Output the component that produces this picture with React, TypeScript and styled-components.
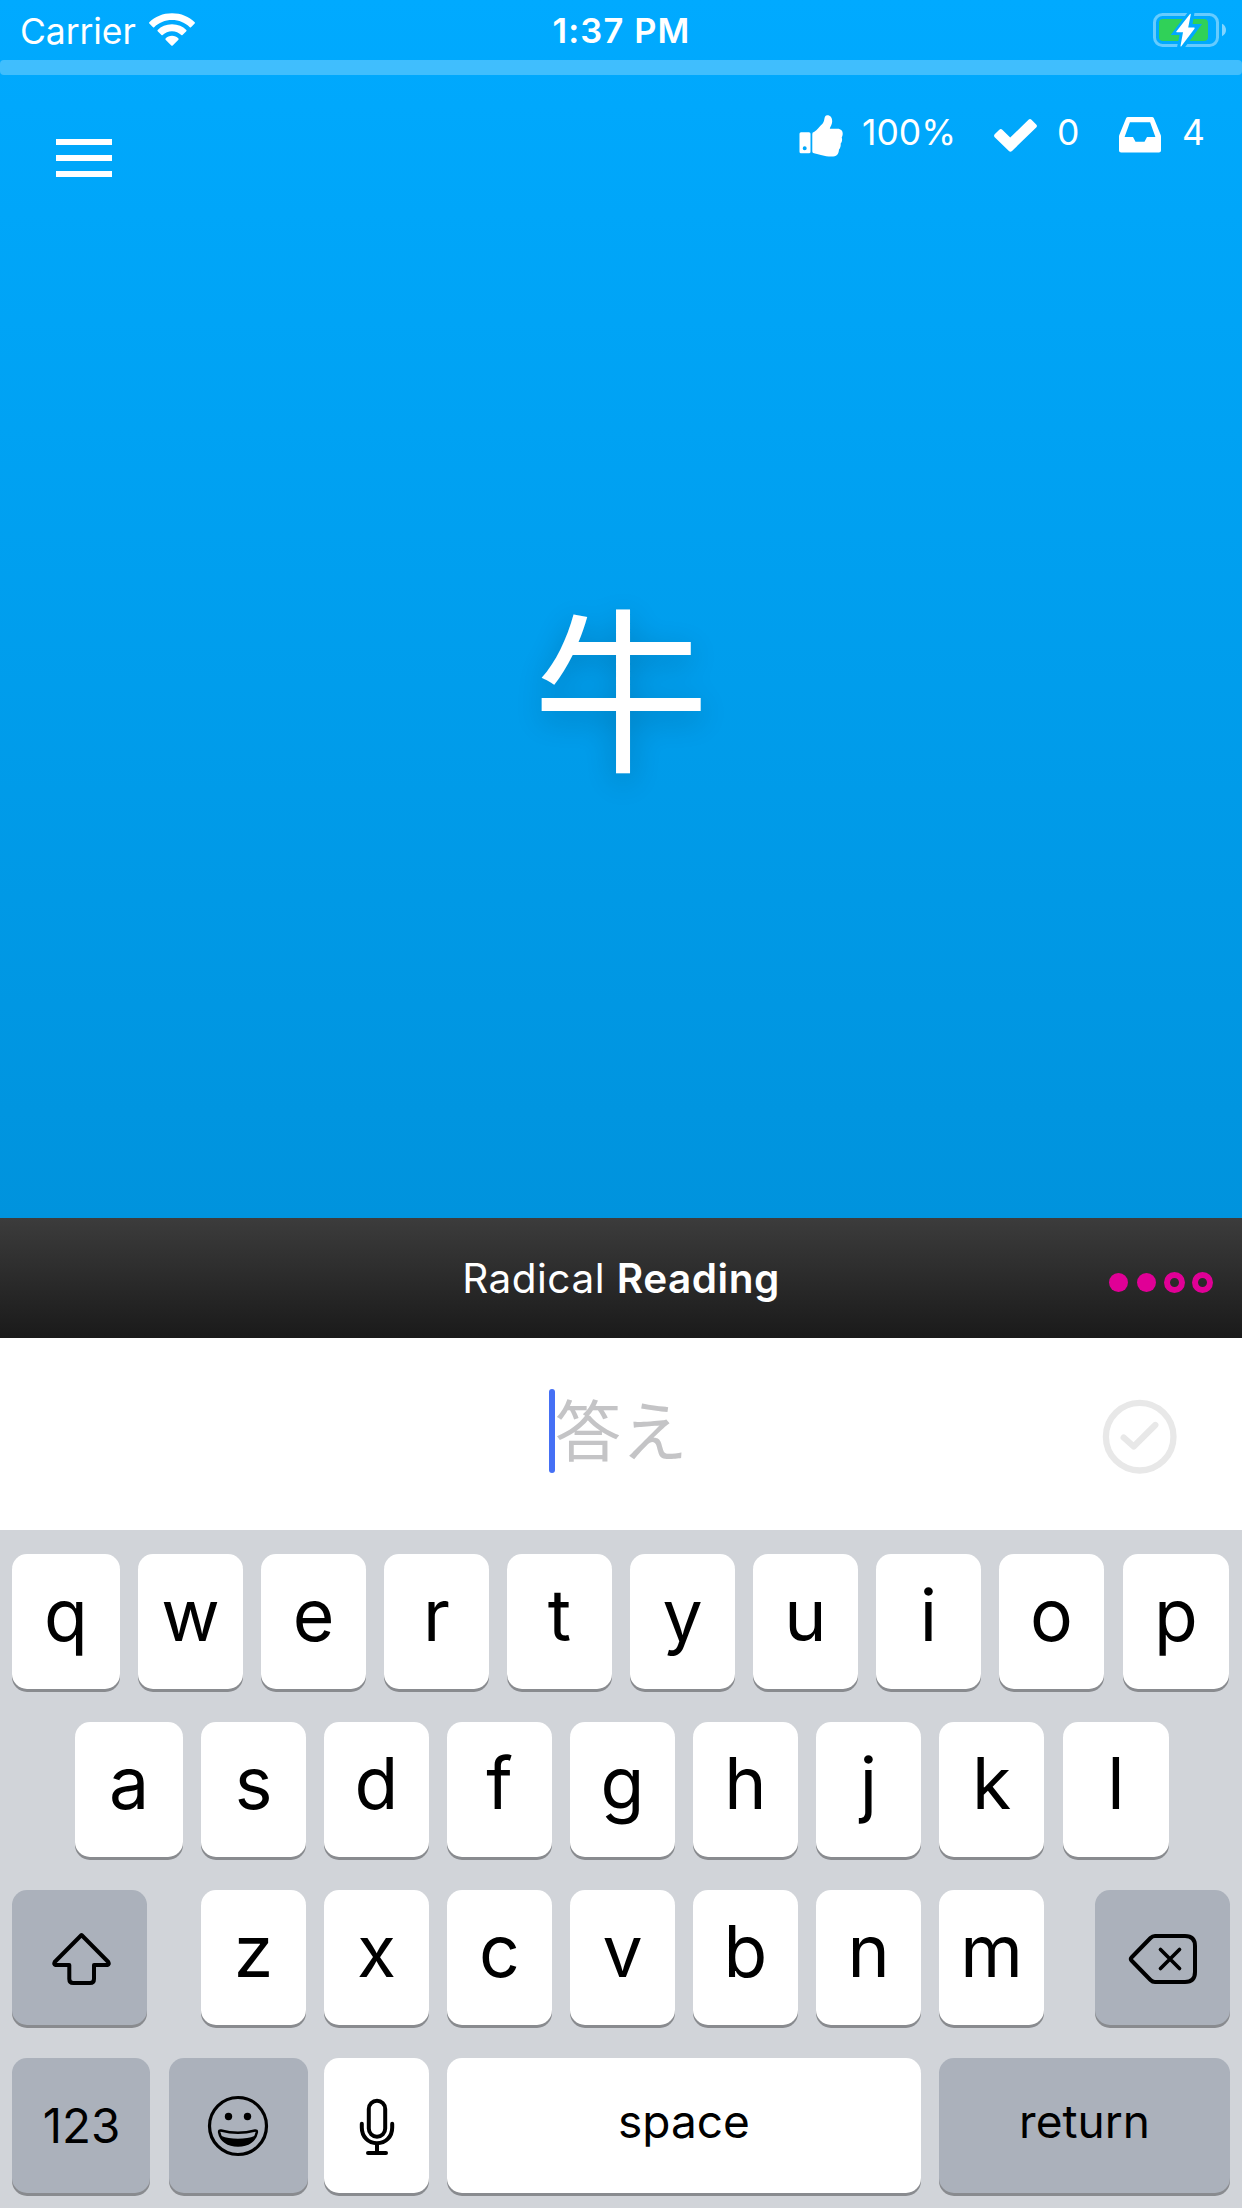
import React from 'react';
import styled, { createGlobalStyle } from 'styled-components';

const Global = createGlobalStyle`
  * { box-sizing: border-box; }
  body { margin: 0; background: #d1d4d9; font-family: Inter, "Noto Sans CJK JP", sans-serif; }
  svg { display: block; }
`;

const Screen = styled.div`
  width: 1242px;
  height: 2208px;
  display: flex;
  flex-direction: column;
  overflow: hidden;
`;

const Hero = styled.section`
  height: 1218px;
  display: flex;
  flex-direction: column;
  color: #fff;
  background: linear-gradient(#00aaff, #0093dd);
`;

const StatusBar = styled.header`
  height: 60px;
  padding: 0 16px 0 20px;
  display: grid;
  grid-template-columns: 1fr auto 1fr;
  align-items: center;
`;

const Label = styled.span<{ $size: number; $weight?: number; $spacing?: number }>`
  font-size: ${p => p.$size}px;
  font-weight: ${p => p.$weight ?? 400};
  letter-spacing: ${p => p.$spacing ?? 0}px;
  line-height: 1.2;
  white-space: pre;
`;

const Carrier = styled.div`
  display: flex;
  align-items: center;
  gap: 13px;
  padding-top: 4px;
`;

const WifiSlot = styled.div`
  padding-bottom: 5px;
`;

const Clock = styled.div`
  padding: 2px 3px 0 0;
`;

const Power = styled.div`
  display: flex;
  justify-content: flex-end;
`;

const Progress = styled.div`
  height: 15px;
  border-radius: 4px;
  background: rgba(255, 255, 255, 0.25);
`;

const Toolbar = styled.nav`
  display: flex;
  justify-content: space-between;
  align-items: flex-start;
  padding: 36px 37px 0 56px;
`;

const MenuButton = styled.button`
  width: 56px;
  height: 38px;
  margin-top: 28px;
  padding: 0;
  border: 0;
  background: none;
  display: flex;
  flex-direction: column;
  justify-content: space-between;
`;

const MenuBar = styled.span`
  height: 6px;
  width: 100%;
  background: #fff;
`;

const Stats = styled.div`
  display: grid;
  grid-template-columns: 195px 125px 86px;
`;

const Stat = styled.div`
  display: grid;
  grid-template-columns: 63px auto;
  justify-content: start;
  align-items: start;
`;

const StatIcon = styled.div<{ $drop: number }>`
  padding-top: ${p => p.$drop}px;
`;

const StatValue = styled.div`
  padding-top: 1px;
`;

const Prompt = styled.div`
  flex: 1;
  display: flex;
  justify-content: center;
  padding-top: 417px;
  font: 400 177px/177px "Noto Sans CJK JP", sans-serif;
  text-shadow: 0 8px 30px rgba(0, 0, 0, 0.2);
`;

const Question = styled.section`
  height: 120px;
  display: grid;
  grid-template-columns: 1fr auto 1fr;
  align-items: center;
  color: #fff;
  background: linear-gradient(#3c3c3c, #1a1a1a);
`;

const Title = styled.h1`
  margin: 0;
  grid-column: 2;
  display: flex;
  font-weight: 400;
  padding-top: 3px;
`;

const Level = styled.div`
  display: flex;
  justify-content: flex-end;
  align-items: center;
  gap: 7px;
  padding: 8px 29px 0 0;
`;

const Dot = styled.span<{ $hollow?: boolean }>`
  width: 21px;
  height: 21px;
  border-radius: 50%;
  border: ${p => (p.$hollow ? '6px solid #e00096' : '1px solid transparent')};
  background: ${p => (p.$hollow ? 'none' : '#e00096')};
  background-clip: padding-box;
`;

const Answer = styled.section`
  height: 192px;
  display: grid;
  grid-template-columns: 1fr auto 1fr;
  background: #fff;
`;

const Field = styled.div`
  grid-column: 2;
  display: flex;
  align-items: flex-start;
  padding: 51px 5px 0 0;
`;

const Caret = styled.span`
  width: 6px;
  height: 84px;
  border-radius: 3px;
  background: #4570f5;
`;

const Placeholder = styled.span`
  font: 400 66px/77px "Noto Sans CJK JP", sans-serif;
  letter-spacing: 0.5px;
  color: #c4c4c6;
`;

const Submit = styled.button`
  justify-self: end;
  width: 76px;
  height: 76px;
  margin: 61px 65px 0 0;
  padding: 0;
  border: 0;
  background: none;
`;

const Keyboard = styled.section`
  flex: 1;
  padding: 24px 12px 0;
  display: flex;
  flex-direction: column;
  gap: 33px;
  background: #d1d4d9;
`;

const KeyRow = styled.div<{ $inset?: number }>`
  display: flex;
  height: 135px;
  padding-left: ${p => p.$inset ?? 0}px;
`;

const Key = styled.button<{ $w?: number; $before?: number; $gap?: number; $dark?: boolean; $pad?: string }>`
  flex: none;
  width: ${p => p.$w ?? 105}px;
  height: 135px;
  margin: 0 ${p => p.$gap ?? 18}px 0 ${p => p.$before ?? 0}px;
  padding: ${p => p.$pad ?? '0'};
  border: 0;
  border-radius: 15px;
  display: flex;
  align-items: center;
  justify-content: center;
  color: #000;
  font-family: inherit;
  background: ${p => (p.$dark ? '#abb1bb' : '#fff')};
  box-shadow: 0 3px 0 #898b8f;
`;

const Wifi = () => (
  <svg width="46" height="34" viewBox="0 0 46 34" fill="#fff">
    <path d="M23 0.3C32 .3 40.200 3.700 45.700 9.200Q46.200 9.800 45.700 10.400L42 14.200Q41.400 14.800 40.800 14.200C36.200 9.700 30 7 23 7S9.800 9.700 5.200 14.200Q4.600 14.800 4 14.200L.3 10.400Q-.2 9.800.3 9.200C5.800 3.700 14 .3 23 .3Z" />
    <path d="M23 11.300C29 11.300 33.800 13.500 37.300 17Q37.900 17.600 37.300 18.200L33.500 22Q32.900 22.600 32.300 22C29.800 19.600 26.700 18.200 23 18.200S16.200 19.600 13.700 22Q13.100 22.600 12.500 22L8.700 18.200Q8.100 17.600 8.700 17C12.200 13.500 17 11.300 23 11.300Z" />
    <path d="M23 22.800C25.600 22.800 27.800 23.900 29.400 25.500Q30 26.100 29.400 26.700L23.700 32.500Q23 33.200 22.300 32.500L16.600 26.700Q16 26.100 16.600 25.500C18.200 23.900 20.400 22.800 23 22.800Z" />
  </svg>
);

const Battery = () => (
  <svg width="73" height="34" viewBox="0 0 73 34">
    <mask id="bolt-gap">
      <rect width="73" height="34" fill="#fff" />
      <path d="M36.500 -3 17.700 22H26.500L23.500 37L30 37 49 10.900H39.500L42 -3Z" fill="#000" />
    </mask>
    <g mask="url(#bolt-gap)">
      <rect x="1.500" y="1.500" width="63" height="31" rx="8" fill="none" stroke="#fff" strokeOpacity=".4" strokeWidth="3" />
      <rect x="6" y="6" width="49" height="22" rx="4" fill="#30d158" />
    </g>
    <path d="M69 10.800C71.500 12 73 14.300 73 17S71.500 22 69 23.200Z" fill="#fff" fillOpacity=".5" />
    <path d="M37 1 23.300 18.500Q23 19.200 23.800 19.200H30L27.500 33Q27.800 34 28.500 33L41.500 15.800Q42 14.500 41 14.500H35.200L37.800 1.500Q37.500.5 37 1Z" fill="#fff" />
  </svg>
);

const Thumb = () => (
  <svg width="44" height="42" viewBox="0 0 44 42" fill="#fff">
    <path fillRule="evenodd" d="M2 17.300H10Q11.500 17.300 11.500 18.800V36.700Q11.500 38.200 10 38.200H2Q.5 38.200.5 36.700V18.800Q.5 17.300 2 17.300ZM5.700 31.300A2 2 0 1 0 5.700 35.300A2 2 0 1 0 5.700 31.300Z" />
    <path d="M13.300 19Q13.300 17.300 15 17.100C18.500 14.800 20 11.700 23.500 8.700C26.200 6.200 24.500.3 28.200.3C31.600.3 33.300 3 33.200 6.500C33.100 10 31 11.700 30.800 13.800H38.500C42 13.800 44 16.300 43.700 19C43.600 21 42.900 21.700 42.700 22.500C43.500 24.500 43.100 27 41.700 28.500C42 31 41.200 33.300 40 34.500C39.700 39.500 37.500 41.600 32.500 41.600C25 41.600 20.500 39.500 15 38.300Q13.300 38 13.300 36.500Z" />
  </svg>
);

const Check = () => (
  <svg width="43" height="33" viewBox="0 0 43 33" fill="#fff">
    <path d="M.7 15.300 5.300 10.700Q6.800 9.300 8.300 10.700L16.200 18.500 34.500.8Q36 -.6 37.500.8L42.200 5.400Q43.700 6.900 42.200 8.400L18 32Q16.400 33.300 14.900 32L.7 18.200Q-.6 16.800.7 15.300Z" />
  </svg>
);

const Inbox = () => (
  <svg width="42" height="36" viewBox="0 0 42 36" fill="#fff">
    <path fillRule="evenodd" d="M9 0H33Q34.300 0 34.900 1.300L41.500 17.500Q42 18.500 42 19.700V33.500Q42 35.600 39.900 35.600H2.100Q0 35.600 0 33.500V19.700Q0 18.500.5 17.500L7.100 1.300Q7.700 0 9 0ZM10.900 5.200 5.600 20H14L16.500 24.800H25.500L28 20H36.400L31.100 5.200Z" />
  </svg>
);

const SubmitIcon = () => (
  <svg width="76" height="76" viewBox="0 0 76 76" fill="none" stroke="#e8e8e8" strokeWidth="6.300" strokeLinecap="round" strokeLinejoin="round">
    <circle cx="38.700" cy="37.700" r="33.800" />
    <path d="M22.700 38.500 32.700 47.500 54.300 26" />
  </svg>
);

const Shift = () => (
  <svg width="60" height="54" viewBox="0 0 60 54" fill="none" stroke="#000" strokeWidth="4" strokeLinejoin="round">
    <path d="M30.500 3 3.700 30Q2.500 32.500 4.500 33H18.300V47Q18.300 51 22.300 51H39Q43 51 43 47V33H56.500Q58.500 32.500 57.300 30Z" />
  </svg>
);

const Backspace = () => (
  <svg width="70" height="52" viewBox="0 0 70 52" fill="none" stroke="#000" strokeWidth="4" strokeLinejoin="round" strokeLinecap="round">
    <path d="M27 3H57Q67 3 67 13V39Q67 49 57 49H27Q24.500 49 22.500 47L3.500 27.500Q2 26 3.500 24.500L22.500 5Q24.500 3 27 3Z" />
    <path d="M32.500 16.500 51.500 35.500M51.500 16.500 32.500 35.500" strokeWidth="3.700" />
  </svg>
);

const Smiley = () => (
  <svg width="62" height="62" viewBox="0 0 62 62" fill="none" stroke="#000" strokeWidth="3">
    <circle cx="31" cy="31" r="28.500" strokeWidth="3.200" />
    <circle cx="21.500" cy="21.500" r="3.700" fill="#000" stroke="none" />
    <circle cx="40.500" cy="21.500" r="3.700" fill="#000" stroke="none" />
    <path d="M14 35.500Q31 40 48 35.500Q50 35.200 49.800 37.200C48.300 45.500 41 50.500 31 50.500S13.700 45.500 12.200 37.200Q12 35.200 14 35.500Z" strokeWidth="2.600" />
    <path d="M14.500 41Q21 43.700 31 43.700T47.500 41C45 47.500 39.500 51 31 51S17 47.500 14.500 41Z" fill="#000" stroke="none" />
  </svg>
);

const Mic = () => (
  <svg width="36" height="58" viewBox="0 0 36 58" fill="none" stroke="#000" strokeWidth="4" strokeLinecap="round">
    <rect x="9.800" y="2.800" width="16.400" height="36" rx="8.200" />
    <path d="M2.800 25.800V29.500C2.800 39 9.500 45.300 18 45.300S33.200 39 33.200 29.500V25.800M18 45.300V55M9 55H27" />
  </svg>
);

const LetterKeys = ({ letters, first, last, lastGap = 19 }: { letters: string; first?: number; last?: number; lastGap?: number }) => (
  <>
    {letters.split('').map((letter, i) => (
      <Key
        key={letter}
        $pad="0 0 11px"
        $w={i === 0 ? first : i === letters.length - 1 ? last : undefined}
        $gap={i === letters.length - 2 ? lastGap : undefined}
      >
        <Label $size={71.500} $weight={380}>{letter}</Label>
      </Key>
    ))}
  </>
);

export default function App() {
  return (
    <>
      <Global />
      <Screen>
        <Hero>
          <StatusBar>
            <Carrier>
              <Label $size={35.500} $spacing={-0.100}>Carrier</Label>
              <WifiSlot><Wifi /></WifiSlot>
            </Carrier>
            <Clock>
              <Label $size={34.500} $weight={600} $spacing={1.100}>1:37 PM</Label>
            </Clock>
            <Power><Battery /></Power>
          </StatusBar>
          <Progress />
          <Toolbar>
            <MenuButton aria-label="Menu"><MenuBar /><MenuBar /><MenuBar /></MenuButton>
            <Stats>
              <Stat>
                <StatIcon $drop={3.500}><Thumb /></StatIcon>
                <StatValue><Label $size={35.500} $weight={380}>100%</Label></StatValue>
              </Stat>
              <Stat>
                <StatIcon $drop={8}><Check /></StatIcon>
                <StatValue><Label $size={35.500} $weight={380}>0</Label></StatValue>
              </Stat>
              <Stat>
                <StatIcon $drop={6}><Inbox /></StatIcon>
                <StatValue><Label $size={35.500} $weight={380}>4</Label></StatValue>
              </Stat>
            </Stats>
          </Toolbar>
          <Prompt>牛</Prompt>
        </Hero>
        <Question>
          <Title>
            <Label $size={40.500} $weight={380} $spacing={0.500}>Radical </Label>
            <Label $size={40.500} $weight={600} $spacing={0.500}>Reading</Label>
          </Title>
          <Level><Dot /><Dot /><Dot $hollow /><Dot $hollow /></Level>
        </Question>
        <Answer>
          <Field><Caret /><Placeholder>答え</Placeholder></Field>
          <Submit aria-label="Submit"><SubmitIcon /></Submit>
        </Answer>
        <Keyboard>
          <KeyRow><LetterKeys letters="qwertyuiop" first={108} last={106} /></KeyRow>
          <KeyRow $inset={63}><LetterKeys letters="asdfghjkl" first={108} last={106} /></KeyRow>
          <KeyRow>
            <Key $dark $w={135} $gap={54} $pad="3px 0 0 3px" aria-label="Shift"><Shift /></Key>
            <LetterKeys letters="zxcvbnm" lastGap={18} />
            <Key $dark $w={135} $before={33} $gap={0} $pad="3px 0 0 1px" aria-label="Delete"><Backspace /></Key>
          </KeyRow>
          <KeyRow>
            <Key $dark $w={138} $gap={19} $pad="0 0 0 1px"><Label $size={47.500}>123</Label></Key>
            <Key $dark $w={139} $gap={16} $pad="1px 1px 0 0" aria-label="Emoji"><Smiley /></Key>
            <Key $pad="3px 0 0 1px" aria-label="Dictate"><Mic /></Key>
            <Key $w={474} $pad="0 0 8px"><Label $size={46}>space</Label></Key>
            <Key $dark $w={291} $gap={0} $pad="0 0 8px"><Label $size={46}>return</Label></Key>
          </KeyRow>
        </Keyboard>
      </Screen>
    </>
  );
}
